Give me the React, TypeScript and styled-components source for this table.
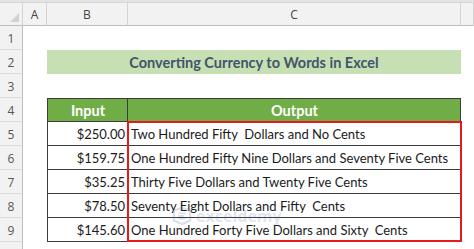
import React from 'react';
import styled, { createGlobalStyle } from 'styled-components';

const GlobalStyle = createGlobalStyle`
    html, body {
        margin: 0;
        padding: 0;
        background: #ffffff;
    }
    body {
        font-family: Lato, "Open Sans", sans-serif;
    }
`;

const rows = [
    { input: '$250.00', output: 'Two Hundred Fifty\u00a0 Dollars and No Cents' },
    { input: '$159.75', output: 'One Hundred Fifty Nine Dollars and Seventy Five Cents' },
    { input: '$35.25', output: 'Thirty Five Dollars and Twenty Five Cents' },
    { input: '$78.50', output: 'Seventy Eight Dollars and Fifty\u00a0 Cents' },
    { input: '$145.60', output: 'One Hundred Forty Five Dollars and Sixty\u00a0 Cents' },
];

const Sheet = styled.div`
    position: relative;
    width: 474px;
    height: 249px;
    overflow: hidden;
    display: grid;
    grid-template-columns: 23px 24px 81px 333px 1fr;
    grid-template-rows: 3px 23px repeat(9, 24px) 1fr;
    background: #ffffff;
`;

const TopStrip = styled.div`
    grid-column: 1 / -1;
    grid-row: 1;
    background: #e4e4e4;
    border-bottom: 1px solid #d6d6d6;
`;

const Corner = styled.div`
    grid-column: 1;
    grid-row: 2;
    position: relative;
    background: #f2f2f2;
    border-right: 1px solid #d4d4d4;
    border-bottom: 1px solid #bdbdbd;
    &::after {
        content: '';
        position: absolute;
        right: 3px;
        bottom: 3px;
        border-style: solid;
        border-width: 0 0 9px 9px;
        border-color: transparent transparent #d2d2d2 transparent;
    }
`;

const ColHead = styled.div<{ $col: number }>`
    grid-column: ${p => p.$col};
    grid-row: 2;
    display: flex;
    align-items: center;
    justify-content: center;
    background: #f2f2f2;
    border-right: 1px solid #d4d4d4;
    border-bottom: 1px solid #bdbdbd;
    color: #444444;
    font-family: "Open Sans", sans-serif;
    font-size: 12px;
`;

const RowHead = styled.div<{ $row: number }>`
    grid-column: 1;
    grid-row: ${p => p.$row};
    display: flex;
    align-items: center;
    justify-content: center;
    background: #f2f2f2;
    border-right: 1px solid #bdbdbd;
    border-bottom: 1px solid #dcdcdc;
    color: #555555;
    font-family: "Open Sans", sans-serif;
    font-size: 12px;
    padding-top: 2px;
    box-sizing: border-box;
`;

const RowHeadFill = styled.div`
    grid-column: 1;
    grid-row: 12;
    background: #f2f2f2;
    border-right: 1px solid #bdbdbd;
`;

const Title = styled.div`
    grid-column: 3 / 5;
    grid-row: 4;
    display: flex;
    align-items: center;
    justify-content: center;
    background: #c6e0b4;
    color: #44546a;
    font-family: Lato, sans-serif;
    font-weight: 700;
    font-size: 14.5px;
    padding-top: 1px;
`;

const TableCell = styled.div<{ $row: number; $col: number; $head?: boolean; $align: 'left' | 'right' | 'center' }>`
    grid-column: ${p => p.$col};
    grid-row: ${p => p.$row};
    display: flex;
    align-items: center;
    justify-content: ${p => (p.$align === 'left' ? 'flex-start' : p.$align === 'right' ? 'flex-end' : 'center')};
    padding: 1px 2px 0 3px;
    box-sizing: border-box;
    border-right: 1px solid #3c3c3c;
    border-bottom: 1px solid #3c3c3c;
    border-left: ${p => (p.$col === 3 ? '1px solid #3c3c3c' : 'none')};
    border-top: ${p => (p.$head ? '1px solid #3c3c3c' : 'none')};
    background: ${p => (p.$head ? '#70ad47' : '#ffffff')};
    color: ${p => (p.$head ? '#ffffff' : '#1a1a1a')};
    font-family: Lato, sans-serif;
    font-weight: ${p => (p.$head ? 700 : 400)};
    font-size: ${p => (p.$head ? '14.5px' : '13px')};
    white-space: nowrap;
`;

const Highlight = styled.div`
    grid-column: 4;
    grid-row: 7 / 12;
    margin: -1px -1px 0 -1px;
    border: 2px solid #e8191b;
    pointer-events: none;
`;

const Watermark = styled.div`
    position: absolute;
    left: 172px;
    top: 207px;
    display: flex;
    align-items: center;
    gap: 4px;
    color: rgba(90, 120, 170, 0.2);
    font-family: "Open Sans", sans-serif;
    font-weight: 700;
    font-size: 16px;
    line-height: 18px;
    pointer-events: none;
`;

const App = () => {
    return (
        <>
            <GlobalStyle />
            <Sheet>
                <TopStrip />
                <Corner />
                <ColHead $col={2}>A</ColHead>
                <ColHead $col={3}>B</ColHead>
                <ColHead $col={4}>C</ColHead>
                <ColHead $col={5} />
                {[1, 2, 3, 4, 5, 6, 7, 8, 9].map(n => (
                    <RowHead key={n} $row={n + 2}>{n}</RowHead>
                ))}
                <RowHeadFill />
                <Title>Converting Currency to Words in Excel</Title>
                <TableCell $row={6} $col={3} $head $align="center">Input</TableCell>
                <TableCell $row={6} $col={4} $head $align="center">Output</TableCell>
                {rows.map((r, i) => (
                    <React.Fragment key={r.input}>
                        <TableCell $row={i + 7} $col={3} $align="right">{r.input}</TableCell>
                        <TableCell $row={i + 7} $col={4} $align="left">{r.output}</TableCell>
                    </React.Fragment>
                ))}
                <Highlight />
                <Watermark>
                    <svg width="20" height="18" viewBox="0 0 22 20">
                        <path d="M2 4 L11 1 L20 4 L20 15 L11 19 L2 15 Z" fill="none" stroke="rgba(90,120,170,0.22)" strokeWidth="2.5" />
                        <path d="M7 7 L15 7 M7 10 L13 10 M7 13 L15 13" stroke="rgba(90,120,170,0.22)" strokeWidth="2" />
                    </svg>
                    exceldemy
                </Watermark>
            </Sheet>
        </>
    );
};

export default App;
